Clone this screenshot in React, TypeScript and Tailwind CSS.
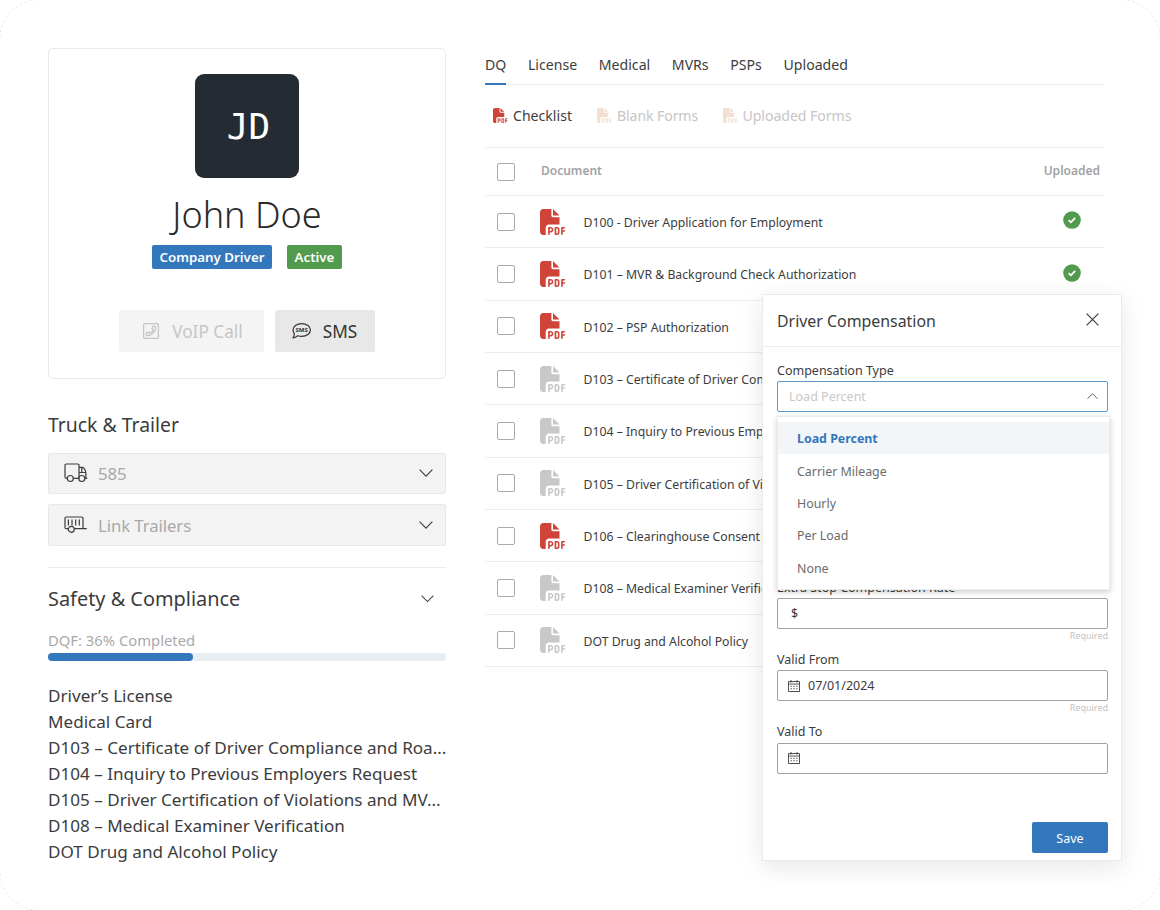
import { ReactNode } from 'react'
import clsx from 'clsx'
import { FaFilePdf } from 'react-icons/fa6'

const missing = [
  'Driver’s License',
  'Medical Card',
  'D103 – Certificate of Driver Compliance and Roa...',
  'D104 – Inquiry to Previous Employers Request',
  'D105 – Driver Certification of Violations and MV...',
  'D108 – Medical Examiner Verification',
  'DOT Drug and Alcohol Policy',
]

const tabs = ['DQ', 'License', 'Medical', 'MVRs', 'PSPs', 'Uploaded']

const documents = [
  { name: 'D100 - Driver Application for Employment', ready: true, uploaded: true },
  { name: 'D101 – MVR & Background Check Authorization', ready: true, uploaded: true },
  { name: 'D102 – PSP Authorization', ready: true },
  { name: 'D103 – Certificate of Driver Compliance', ready: false },
  { name: 'D104 – Inquiry to Previous Employers', ready: false },
  { name: 'D105 – Driver Certification of Violations', ready: false },
  { name: 'D106 – Clearinghouse Consent', ready: true },
  { name: 'D108 – Medical Examiner Verification', ready: false },
  { name: 'DOT Drug and Alcohol Policy', ready: false },
]

const compensationTypes = ['Load Percent', 'Carrier Mileage', 'Hourly', 'Per Load', 'None']

const Chevron = ({ className }: { className?: string }) => (
  <svg viewBox="0 0 14 8" fill="none" stroke="currentColor" strokeWidth="1.1" className={clsx('shrink-0', className)}>
    <path d="M.6.7 7 7.1 13.4.7" />
  </svg>
)

const PhoneIcon = () => (
  <svg width="16" height="16" viewBox="0 0 16 16" fill="none" stroke="currentColor" strokeWidth="1.3">
    <rect x=".6" y=".6" width="14.8" height="14.8" rx="1.6" />
    <path d="M10 3.1 12.6 3.7C12.7 8.8 8.8 12.7 3.7 12.7L3.1 10.2 5.9 9 7 10.3C8.5 9.6 9.6 8.5 10.3 7L9 5.9Z" strokeLinejoin="round" />
  </svg>
)

const SmsIcon = () => (
  <svg width="19" height="16" viewBox="0 0 19 16" fill="none" stroke="currentColor" strokeWidth="1.2">
    <path d="M9.7.7C14.7.7 18.4 3.4 18.4 7S14.7 13.3 9.7 13.3C8.3 13.3 7 13.1 5.8 12.7 4.6 13.900 2.9 14.900.9 15 1.8 13.900 2.3 12.600 2.400 10.800 1.400 9.700 1 8.400 1 7 1 3.400 4.700.7 9.700.7Z" strokeLinejoin="round" />
    <text x="9.7" y="9.2" textAnchor="middle" fontSize="6" fontWeight="700" fill="currentColor" stroke="none">SMS</text>
  </svg>
)

const TruckIcon = () => (
  <svg width="24" height="20" viewBox="0 0 24 20" fill="none" stroke="currentColor" strokeWidth="1.2">
    <path d="M3.2 15.3H2.2A1.2 1.2 0 0 1 1 14.1V2.2A1.2 1.2 0 0 1 2.2 1H13.8A1.2 1.2 0 0 1 15 2.2V15.3M9.4 15.3H14.800M15 4.3H18C20.3 4.3 21.3 7 21.9 9.8V15.3M15 9.5H21.9M17.800 4.3V9.500M20.800 15.3H23.200" />
    <circle cx="6.3" cy="15.5" r="3" />
    <circle cx="17.8" cy="15.5" r="3" />
  </svg>
)

const TrailerIcon = () => (
  <svg width="24" height="18" viewBox="0 0 24 18" fill="none" stroke="currentColor" strokeWidth="1.2">
    <path d="M4.3 12.7H2.2A1.2 1.2 0 0 1 1 11.5V2.2A1.2 1.2 0 0 1 2.2 1H17.8A1.2 1.2 0 0 1 19 2.2V12.7M10.3 12.7H22.8" />
    <path d="M4.4 3.6V9.4M8 3.6V9.4M11.7 3.6V9.4M15.3 3.6V9.4" />
    <circle cx="7.3" cy="13.3" r="3" />
  </svg>
)

const CalendarIcon = () => (
  <svg width="12" height="12" viewBox="0 0 12 12" fill="none" stroke="currentColor" strokeWidth=".9">
    <path d="M.5 1.5H11.5V11.5H.5ZM.5 4H11.5M3 0V2.5M9 0V2.5" />
    <path d="M2.5 6.3H9.6M2.5 8.8H9.6" strokeDasharray="1.4 1.4" />
  </svg>
)

const CheckBadge = () => (
  <svg width="18" height="18" viewBox="0 0 18 18" fill="none">
    <circle cx="9" cy="9" r="8.8" fill="#519a4e" />
    <path d="M5.6 9.200 7.900 11.3 12.2 6.9" stroke="#fff" strokeWidth="1.8" />
  </svg>
)

const Checkbox = () => <span className="size-[18px] shrink-0 rounded-[2px] border border-[#aaa] bg-white" />

const VehicleSelect = ({ icon, text }: { icon: ReactNode; text: string }) => (
  <div className="flex h-[41.5px] items-center rounded-[2px] border border-[#e8e8e8] bg-[#f3f3f3] pr-3 pl-[15px] text-[#3c3c3c]">
    {icon}
    <span className="ml-[10px] flex-1 pt-px text-[16.8px] tracking-[-0.1px] text-[#a9a9a9]">{text}</span>
    <Chevron className="w-[14px]" />
  </div>
)

const Profile = () => (
  <aside className="w-[398px] shrink-0">
    <section className="flex h-[331px] flex-col items-center rounded-[5px] border border-[#e9e9e9] pt-[25px]">
      <div className="flex size-[104px] items-center justify-center rounded-[9px] bg-[#242b33] pt-0.5 pl-[3px] font-['DejaVu_Sans_Mono',monospace] text-4xl text-white">
        JD
      </div>
      <h1 className="mt-[13px] text-[36px] leading-[48px] font-[350] text-[#2b2b2b]">John Doe</h1>
      <div className="mt-[6px] flex gap-[15px] text-[13.3px] leading-none font-semibold text-white">
        <span className="flex h-6 w-[120px] items-center justify-center rounded-[2px] bg-[#3378bd] pt-0.5">Company Driver</span>
        <span className="flex h-6 w-[55px] items-center justify-center rounded-[2px] bg-[#519a4e] pt-0.5">Active</span>
      </div>
      <div className="mt-[41px] flex gap-[11px] text-[17.2px]">
        <button className="flex h-[41.5px] w-[144.5px] items-center gap-[13px] rounded-[2px] bg-[#f4f4f4] pl-6 text-[#c6c6c6]">
          <PhoneIcon />
          <span className="pt-0.5">VoIP Call</span>
        </button>
        <button className="flex h-[41.5px] w-[100px] items-center gap-[12px] rounded-[2px] bg-[#e8e8e8] pl-[17px] text-[#333]">
          <SmsIcon />
          <span className="pt-0.5">SMS</span>
        </button>
      </div>
    </section>

    <h2 className="mt-[32px] text-[19.4px] leading-7">Truck &amp; Trailer</h2>
    <div className="mt-[13.5px] flex flex-col gap-[10px]">
      <VehicleSelect icon={<TruckIcon />} text="585" />
      <VehicleSelect icon={<TrailerIcon />} text="Link Trailers" />
    </div>

    <div className="mt-[21px] flex items-center justify-between border-t border-[#ececec] pt-[17.5px] pr-[12px]">
      <h2 className="text-[19.9px] leading-7">Safety &amp; Compliance</h2>
      <Chevron className="w-[13px]" />
    </div>
    <p className="mt-[17px] text-[14.8px] leading-5 text-[#a9a9a9]">DQF: 36% Completed</p>
    <div className="mt-[2.5px] h-2 rounded-full bg-[#e9eef2]">
      <div className="h-2 w-[145px] rounded-full bg-[#3378bd]" />
    </div>
    <ul className="mt-[22px] text-[17.1px] leading-[26px] whitespace-nowrap">
      {missing.map((item) => (
        <li key={item}>{item}</li>
      ))}
    </ul>
  </aside>
)

const Documents = () => (
  <main className="w-[619px] shrink-0">
    <nav className="flex h-[37px] gap-[21.7px] border-b border-[#ececec] pt-[6.5px] text-[14.1px] leading-5">
      {tabs.map((tab) => (
        <a key={tab} className={clsx('h-[30.5px] border-b-2', tab === 'DQ' ? 'border-[#3378bd]' : 'border-transparent')}>
          {tab}
        </a>
      ))}
    </nav>
    <div className="flex h-[63px] items-center border-b border-[#ececec] pl-[8px] text-[14.1px]">
      <button className="flex w-[104px] items-center gap-[5px]">
        <FaFilePdf size={15} className="shrink-0 text-[#cf4339]" />
        Checklist
      </button>
      <button className="flex w-[125.5px] items-center gap-[5px] text-[#c6c6c6]">
        <FaFilePdf size={15} className="shrink-0 text-[#f2dfd1]" />
        <span className="tracking-[-0.1px]">Blank Forms</span>
      </button>
      <button className="flex items-center gap-[5px] text-[#c6c6c6]">
        <FaFilePdf size={15} className="shrink-0 text-[#f2dfd1]" />
        <span className="tracking-[-0.05px]">Uploaded Forms</span>
      </button>
    </div>
    <div className="flex h-[48px] items-center border-b border-[#ececec] pr-1 pl-[12px] text-xs font-semibold text-[#a3a3a3]">
      <Checkbox />
      <span className="ml-[26px] flex-1 pb-px">Document</span>
      <span className="pb-px">Uploaded</span>
    </div>
    {documents.map((doc) => (
      <div key={doc.name} className="flex h-[52.35px] items-center border-b border-[#ececec] pr-[23.5px] pl-[12px]">
        <Checkbox />
        <FaFilePdf size={26} className={clsx('ml-[25px] shrink-0', doc.ready ? 'text-[#cf4339]' : 'text-[#c8c8c8]')} />
        <span className="ml-[17.5px] flex-1 pt-[3px] text-[12.25px] whitespace-nowrap">{doc.name}</span>
        {doc.uploaded && (
          <span className="pb-[3px]">
            <CheckBadge />
          </span>
        )}
      </div>
    ))}
  </main>
)

const Field = ({ label, children, required }: { label: string; children?: ReactNode; required?: boolean }) => (
  <div className="flex h-[72.3px] flex-col text-[12.5px]">
    <label className="leading-[18px]">{label}</label>
    <div className="mt-[1.5px] flex h-[31px] items-center gap-2 rounded-[2px] border border-[#a0a0a0] px-[10px]">{children}</div>
    {required && <span className="mt-px self-end text-[9px] leading-3 text-[#c2c2c2]">Required</span>}
  </div>
)

const CompensationDialog = () => (
  <div className="absolute top-[294px] left-[762px] flex h-[567px] w-[360px] flex-col border border-[#eaeaea] bg-white shadow-[0_6px_24px_rgba(0,0,0,0.1)]">
    <header className="flex h-[52px] items-center justify-between border-b border-[#ececec] pr-[22px] pl-[14px]">
      <h3 className="pt-0.5 text-[15.9px]">Driver Compensation</h3>
      <svg width="13" height="13" viewBox="0 0 13 13" stroke="currentColor" strokeWidth="1.2" className="mb-0.5">
        <path d="M.6.6 12.4 12.4M12.4.6.6 12.4" />
      </svg>
    </header>
    <div className="flex flex-1 flex-col pt-[14.5px] pr-[13px] pl-[14px]">
      <div className="relative h-[217px] text-[12.5px]">
        <label className="block leading-[18px]">Compensation Type</label>
        <div className="mt-[1.5px] flex h-[31px] items-center justify-between rounded-[2px] border border-[#5f9ace] pr-[9px] pl-[11px] text-[#c8c8c8]">
          <span className="pt-0.5">Load Percent</span>
          <Chevron className="w-[11px] rotate-180 text-[#444]" />
        </div>
        <ul className="absolute top-[54px] left-0 z-10 h-[174px] w-[333px] border border-[#ececec] bg-white pt-[5.5px] text-[12.4px] text-[#6b6b6b] shadow-[0_2px_6px_rgba(0,0,0,0.2)]">
          {compensationTypes.map((type, i) => (
            <li key={type} className={clsx('flex h-[32.3px] items-center pt-[3px] pl-[19px]', i === 0 && 'bg-[#f3f6f9] font-bold text-[#3378bd]')}>
              {type}
            </li>
          ))}
        </ul>
      </div>
      <Field label="Extra Stop Compensation Rate" required>
        <span className="pt-0.5 pl-[3px]">$</span>
      </Field>
      <Field label="Valid From" required>
        <CalendarIcon />
        <span className="pt-0.5">07/01/2024</span>
      </Field>
      <Field label="Valid To">
        <CalendarIcon />
      </Field>
      <button className="mt-[27px] h-[31px] w-[76px] self-end rounded-[2px] bg-[#3378bd] pt-0.5 text-[12.5px] text-white">Save</button>
    </div>
  </div>
)

export default function App() {
  return (
    <div className="relative h-[910px] w-[1160px] overflow-hidden bg-white font-['Noto_Sans',sans-serif] text-[#3c3c3c]">
      <svg width="1160" height="910" fill="none" stroke="#e6e6e6" strokeDasharray="2 3" className="pointer-events-none absolute inset-0">
        <path d="M0 37A38 38 0 0 1 37 0M1123 0A38 38 0 0 1 1160 37M1160 873A38 38 0 0 1 1123 910M37 910A38 38 0 0 1 0 873" />
      </svg>
      <div className="flex gap-[39px] pt-12 pl-12">
        <Profile />
        <Documents />
      </div>
      <CompensationDialog />
    </div>
  )
}
